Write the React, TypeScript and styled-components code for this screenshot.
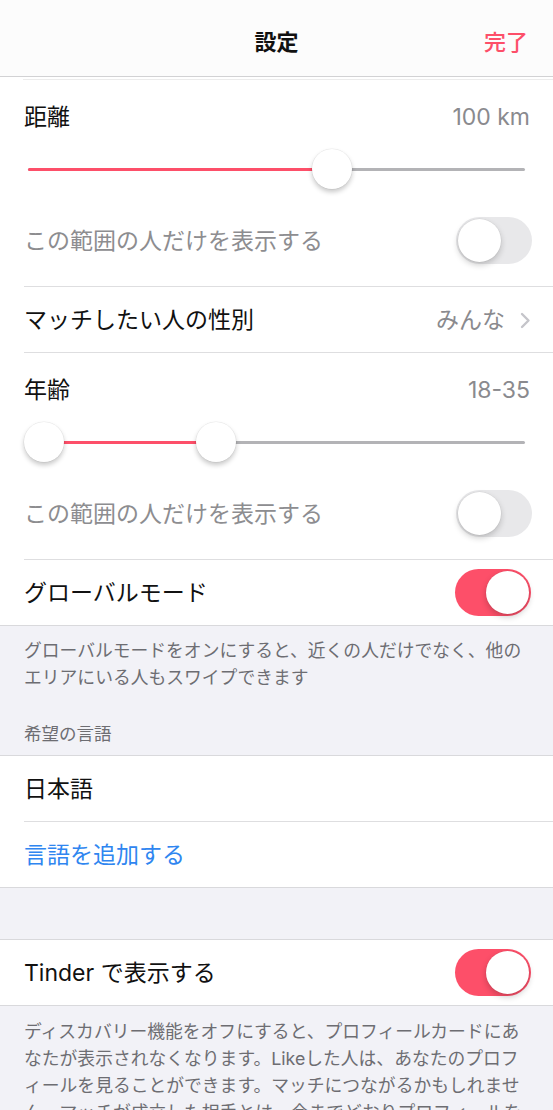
import React from "react";
import styled, { createGlobalStyle } from "styled-components";

const RED = "#fd4f69";
const FONT = `"Inter", "Noto Sans CJK JP", sans-serif`;

const GlobalStyle = createGlobalStyle`
  html, body {
    margin: 0;
    padding: 0;
    background: #ffffff;
  }
  body {
    font-family: ${FONT};
    -webkit-font-smoothing: antialiased;
  }
  * {
    box-sizing: border-box;
  }
`;

interface rangeProps {
  low?: number;
  high: number;
}

interface toggleProps {
  on?: boolean;
}

const ToggleSwitch: React.FC<toggleProps> = ({ on }) => (
  <Toggle $on={on}>
    <Knob $on={on} />
  </Toggle>
);

// thumb centre travels from 20px to 485px inside the slider box
const RangeSlider: React.FC<rangeProps> = ({ low, high }) => {
  const pos = (f: number) => 20 + f * 465;
  const start = low === undefined ? 4 : pos(low);
  const end = pos(high);

  return (
    <Slider>
      <Track />
      <Fill style={{ left: start, width: end - start }} />
      {low !== undefined && <Thumb style={{ left: pos(low) - 20 }} />}
      <Thumb style={{ left: end - 20 }} />
    </Slider>
  );
};

const App: React.FC = () => {
  return (
    <>
      <GlobalStyle />
      <Page>
        <Header>
          <span />
          <Title>設定</Title>
          <Done>完了</Done>
        </Header>
        <HeaderHairline />

        <Group $noTop>
          <Block>
            <LabelLine>
              <Label>距離</Label>
              <Value>100 km</Value>
            </LabelLine>
            <RangeSlider high={0.619} />
            <ToggleLine>
              <Label $muted>この範囲の人だけを表示する</Label>
              <ToggleSwitch />
            </ToggleLine>
          </Block>

          <Cell>
            <Label>マッチしたい人の性別</Label>
            <Accessory>
              <Value>みんな</Value>
              <svg width="11" height="17" viewBox="0 0 11 17">
                <polyline
                  points="2,2 8.5,8.5 2,15"
                  fill="none"
                  stroke="#c5c5ca"
                  strokeWidth="2.4"
                  strokeLinecap="round"
                  strokeLinejoin="round"
                />
              </svg>
            </Accessory>
          </Cell>

          <Block>
            <LabelLine>
              <Label>年齢</Label>
              <Value>18-35</Value>
            </LabelLine>
            <RangeSlider low={0} high={0.37} />
            <ToggleLine>
              <Label $muted>この範囲の人だけを表示する</Label>
              <ToggleSwitch />
            </ToggleLine>
          </Block>

          <Cell $last>
            <Label>グローバルモード</Label>
            <ToggleSwitch on />
          </Cell>
        </Group>

        <FooterText>
          <Line>グローバルモードをオンにすると、近くの人だけでなく、他の</Line>
          <Line>エリアにいる人もスワイプできます</Line>
        </FooterText>
        <SectionHeader>希望の言語</SectionHeader>

        <Group>
          <Cell>
            <Label>日本語</Label>
          </Cell>
          <Cell $last>
            <Label $link>言語を追加する</Label>
          </Cell>
        </Group>

        <Spacer />

        <Group>
          <Cell $last>
            <Label>Tinder で表示する</Label>
            <ToggleSwitch on />
          </Cell>
        </Group>

        <FooterText $top={12}>
          <Line>ディスカバリー機能をオフにすると、プロフィールカードにあ</Line>
          <Line>なたが表示されなくなります。Likeした人は、あなたのプロフ</Line>
          <Line>ィールを見ることができます。マッチにつながるかもしれませ</Line>
          <Line>ん、マッチが成立した相手とは、今までどおりプロフィールを</Line>
        </FooterText>
      </Page>
    </>
  );
};

export default App;

const Page = styled.div`
  width: 100%;
  min-height: 1110px;
  background: #f2f2f7;
  overflow: hidden;
`;

const Header = styled.header`
  display: grid;
  grid-template-columns: 1fr auto 1fr;
  align-items: center;
  height: 77px;
  padding: 8px 0 1px;
  background: #fcfcfc;
  border-bottom: 1px solid #d2d2d4;
`;

const Title = styled.h1`
  margin: 0;
  font-size: 22px;
  font-weight: 700;
  color: #111;
  line-height: 30px;
`;

const Done = styled.span`
  justify-self: end;
  padding-right: 25px;
  font-size: 22px;
  font-weight: 500;
  color: ${RED};
  line-height: 30px;
`;

const HeaderHairline = styled.div`
  height: 3px;
  margin-left: 23px;
  background: #ffffff;
  border-bottom: 1px solid #ececec;
  box-shadow: -23px 0 0 #ffffff;
`;

const Group = styled.section<{ $noTop?: boolean }>`
  background: #ffffff;
  border-top: ${(p) => (p.$noTop ? "none" : "1px solid #d9d9dc")};
  border-bottom: 1px solid #d9d9dc;
`;

const Block = styled.div`
  margin-left: 24px;
  padding: 23px 0 22px;
  border-bottom: 1px solid #dedee0;
`;

const LabelLine = styled.div`
  display: flex;
  justify-content: space-between;
  align-items: center;
  height: 28px;
  padding-right: 23px;
`;

const ToggleLine = styled.div`
  display: flex;
  justify-content: space-between;
  align-items: center;
  height: 47px;
  margin-top: 28px;
  padding-right: 21px;
`;

const Cell = styled.div<{ $last?: boolean }>`
  display: flex;
  justify-content: space-between;
  align-items: center;
  height: ${(p) => (p.$last ? "65px" : "66px")};
  margin-left: 24px;
  padding-right: 22px;
  border-bottom: ${(p) => (p.$last ? "none" : "1px solid #dedee0")};
`;

const Label = styled.span<{ $muted?: boolean; $link?: boolean }>`
  font-size: 23px;
  line-height: 28px;
  font-weight: 400;
  color: ${(p) => (p.$link ? "#2f86f0" : p.$muted ? "#8d8d90" : "#111111")};
  white-space: nowrap;
`;

const Value = styled.span`
  font-size: 23px;
  line-height: 28px;
  color: #8a8a8e;
  white-space: nowrap;
`;

const Accessory = styled.div`
  display: flex;
  align-items: center;
  gap: 15px;
  svg {
    margin-top: 1px;
  }
`;

const Slider = styled.div`
  position: relative;
  height: 40px;
  margin-top: 18px;
  margin-right: 24px;
`;

const Track = styled.div`
  position: absolute;
  left: 4px;
  right: 4px;
  top: 19px;
  height: 3px;
  border-radius: 2px;
  background: #b3b3b6;
`;

const Fill = styled.div`
  position: absolute;
  top: 19px;
  height: 3px;
  border-radius: 2px;
  background: ${RED};
`;

const Thumb = styled.div`
  position: absolute;
  top: 0;
  width: 40px;
  height: 40px;
  border-radius: 50%;
  background: #ffffff;
  box-shadow: 0 3px 5px rgba(0, 0, 0, 0.22), 0 0 0 0.5px rgba(0, 0, 0, 0.08);
`;

const Toggle = styled.div<{ $on?: boolean }>`
  position: relative;
  flex: none;
  width: 76px;
  height: 47px;
  border-radius: 24px;
  background: ${(p) => (p.$on ? RED : "#e8e8ea")};
`;

const Knob = styled.div<{ $on?: boolean }>`
  position: absolute;
  top: 2px;
  left: ${(p) => (p.$on ? "31px" : "2px")};
  width: 43px;
  height: 43px;
  border-radius: 50%;
  background: #ffffff;
  box-shadow: 0 3px 6px rgba(0, 0, 0, 0.2), 0 0 0 0.5px rgba(0, 0, 0, 0.06);
`;

const FooterText = styled.div<{ $top?: number }>`
  padding: ${(p) => p.$top ?? 11}px 20px 0 24px;
  font-size: 17.8px;
  line-height: 27px;
  color: #6d6d72;
`;

const Line = styled.div`
  white-space: nowrap;
`;

const SectionHeader = styled.div`
  padding: 30px 24px 8px;
  font-size: 17.5px;
  line-height: 26px;
  color: #6d6d72;
`;

const Spacer = styled.div`
  height: 51px;
`;
